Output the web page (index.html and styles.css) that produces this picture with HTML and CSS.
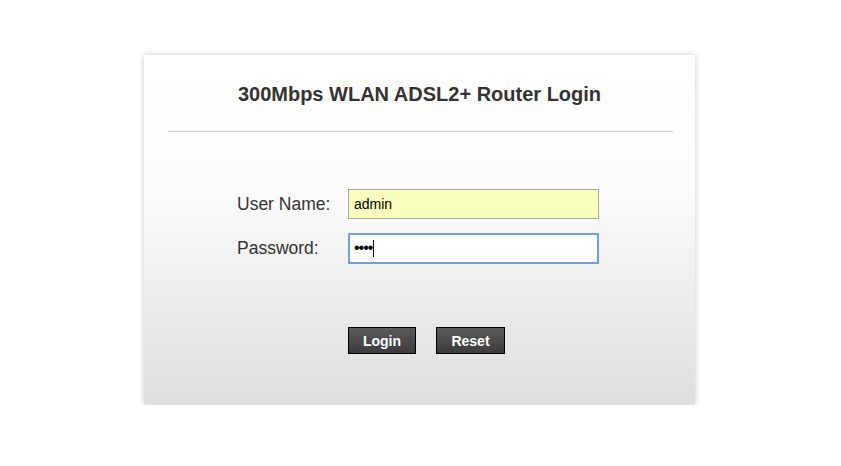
FILE: index.html
```html
<!DOCTYPE html>
<html>
<head>
<meta charset="utf-8">
<link rel="stylesheet" href="styles.css">
</head>
<body>
<div class="card">
  <h1 class="title">300Mbps WLAN ADSL2+ Router Login</h1>
  <div class="rule"></div>
  <form class="form">
    <div class="row">
      <label class="label">User Name:</label>
      <input class="field autofill" type="text" value="admin">
    </div>
    <div class="row">
      <label class="label">Password:</label>
      <div class="field focused"><span class="dots">••••</span><span class="caret"></span></div>
    </div>
    <div class="buttons">
      <button type="button" class="btn btn-login">Login</button>
      <button type="button" class="btn btn-reset">Reset</button>
    </div>
  </form>
</div>
</body>
</html>
```
FILE: styles.css
```css
html, body {
  margin: 0;
  padding: 0;
  background: #fff;
  font-family: "Liberation Sans", Arial, sans-serif;
}
.card {
  box-sizing: border-box;
  margin: 55px 0 0 144px;
  width: 551px;
  height: 350px;
  background: linear-gradient(to bottom, #ffffff 0%, #fbfbfb 40%, #dedede 100%);
  box-shadow: 0 0 6px rgba(0,0,0,0.22);
  border-radius: 2px;
  padding-top: 27px;
}
.title {
  margin: 0;
  text-align: center;
  font-size: 20px;
  font-weight: bold;
  color: #333;
  line-height: 24px;
}
.rule {
  margin: 25px 22px 0 24px;
  height: 1px;
  background: #cccccc;
}
.form {
  margin: 57px 0 0 0;
  display: flex;
  flex-direction: column;
  gap: 14px;
}
.row {
  display: flex;
  align-items: center;
  height: 30px;
}
.label {
  box-sizing: border-box;
  width: 204px;
  padding-left: 93px;
  font-size: 17.5px;
  color: #333;
}
.field {
  box-sizing: border-box;
  width: 251px;
  height: 30px;
  margin: 0;
  padding: 0 5px;
  font-family: "Liberation Sans", Arial, sans-serif;
  font-size: 14px;
  color: #000;
  outline: none;
}
.autofill {
  background: #faffbd;
  border: 1px solid #a9a9a9;
}
.focused {
  height: 31px;
  background: #fff;
  border: 2px solid #6fa0e6;
  display: flex;
  align-items: center;
  padding-left: 4px;
}
.dots {
  font-size: 16px;
  letter-spacing: -1px;
  line-height: 1;
}
.caret {
  display: inline-block;
  width: 1px;
  height: 17px;
  background: #000;
  margin-left: 1px;
}
.buttons {
  display: flex;
  gap: 20px;
  padding-left: 204px;
  margin-top: 50px;
}
.btn {
  box-sizing: border-box;
  height: 27px;
  padding: 0;
  border: 1px solid #000;
  background: linear-gradient(to bottom, #5a5a5a 0%, #3c3c3c 100%);
  color: #fff;
  font-family: "Liberation Sans", Arial, sans-serif;
  font-weight: bold;
  font-size: 14px;
  cursor: pointer;
}
.btn-login { width: 68px; }
.btn-reset { width: 69px; }
```
